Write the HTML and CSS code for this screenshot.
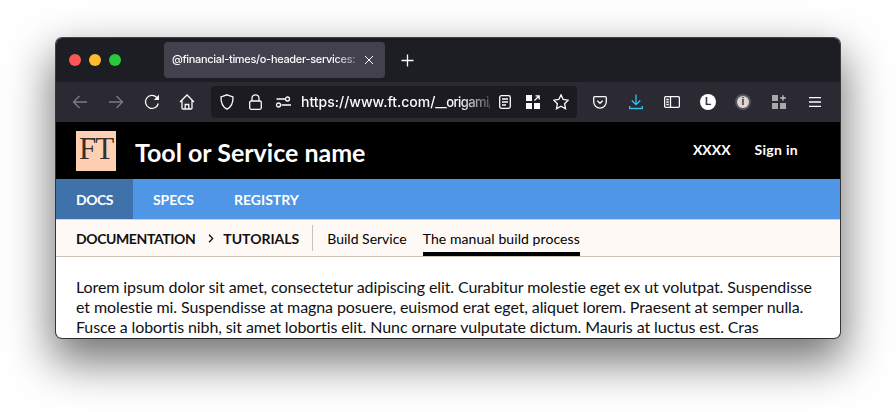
FILE: index.html
```html
<!DOCTYPE html>
<html lang="en">
<head>
<meta charset="utf-8">
<title>Tool or Service name</title>
<link rel="stylesheet" href="styles.css">
</head>
<body>
<div class="window">
  <div class="tabbar">
    <div class="lights"><span class="light red"></span><span class="light yellow"></span><span class="light green"></span></div>
    <div class="tab">
      <span class="tab-title">@financial-times/o-header-services:</span>
      <svg class="tab-close" width="10" height="10" viewBox="0 0 10 10"><path d="M1 1l8 8M9 1l-8 8"/></svg>
    </div>
    <svg class="newtab" width="13" height="13" viewBox="0 0 13 13"><path d="M6.500 .5v12M.5 6.500h12"/></svg>
  </div>
  <div class="toolbar">
    <svg class="ico dim back" width="16" height="16" viewBox="0 0 16 16"><path d="M15 8H1.500M7.500 2L1.500 8l6 6"/></svg>
    <svg class="ico dim fwd" width="16" height="16" viewBox="0 0 16 16"><path d="M1 8h13.500M8.500 2l6 6-6 6"/></svg>
    <svg class="ico reload" width="16" height="16" viewBox="0 0 16 16"><path d="M14.300 9.500A6.500 6.500 0 1 1 12.500 3.200L14.500 5"/><path class="fill" d="M15 .8v5.200H9.800z"/></svg>
    <svg class="ico home" width="16" height="16" viewBox="0 0 16 16"><path d="M1 8l7-7 7 7M3 6.500v7.500a1 1 0 0 0 1 1h8a1 1 0 0 0 1-1V6.500M6.200 15v-4.500h3.600V15"/></svg>
    <div class="urlbar">
      <svg class="ico shield" width="14" height="16" viewBox="0 0 14 16"><path d="M7 .8l6 2.200c.2 5.500-1.300 9.800-6 12.200C2.300 12.800.8 8.500 1 3z"/></svg>
      <svg class="ico lock" width="13" height="16" viewBox="0 0 13 16"><rect x=".7" y="7" width="11.600" height="8.300" rx="1.500"/><path d="M3 7V4.300a3.500 3.500 0 0 1 7 0V7"/></svg>
      <svg class="ico perm" width="15" height="12" viewBox="0 0 15 12"><circle cx="11.500" cy="3" r="2"/><circle cx="2.500" cy="9" r="2"/><path d="M.5 3h8.500M5.500 9H15"/></svg>
      <span class="url">https://www.ft.com/<span class="url-tail">__origami/</span></span>
      <svg class="ico reader" width="12" height="14" viewBox="0 0 12 14"><rect x=".7" y=".7" width="10.600" height="12.600" rx="1.800"/><path d="M3 4h6M3 7h6M3 10h4"/></svg>
      <svg class="ico apps" width="14" height="14" viewBox="0 0 14 14"><path class="solid" d="M0 0h6v6H0zM0 8h6v6H0zM8 8h6v6H8z"/><path class="thin" d="M8.500 5.500L13 1M9.500 .8h3.700v3.700"/></svg>
      <svg class="ico star" width="16" height="16" viewBox="0 0 16 16"><path d="M8 .9l2.200 4.600 5 .7-3.600 3.500.9 5L8 12.300l-4.500 2.400.9-5L.8 6.200l5-.7z"/></svg>
    </div>
    <svg class="ico pocket" width="14" height="13" viewBox="0 0 14 13"><path d="M1.800.7h10.400c.6 0 1.100.5 1.100 1.100v4a6.300 6.300 0 0 1-12.600 0v-4C.7 1.200 1.200.7 1.800.7zM4.300 4.700L7 7.300l2.700-2.600"/></svg>
    <svg class="ico download" width="14" height="16" viewBox="0 0 14 16"><path d="M7 .5v10M2.800 6.500L7 10.700l4.200-4.200M.7 12v2.500h12.600V12"/></svg>
    <svg class="ico sidebar" width="16" height="12" viewBox="0 0 16 12"><rect x=".6" y=".6" width="14.800" height="10.800" rx="1.500"/><path d="M6.500 .6v10.800M2.300 3.500h2.500M2.300 6h2.500M2.300 8.500h2.500"/></svg>
    <span class="ext-l">L</span>
    <span class="ext-pw">i</span>
    <svg class="ico addons" width="14" height="14" viewBox="0 0 14 14"><path class="solid gray" d="M0 0h6v6H0zM0 8h6v6H0zM8 8h6v6H8z"/><path class="thin gray" d="M11 .2v5.600M8.200 3h5.600"/></svg>
    <svg class="ico menu" width="12" height="10" viewBox="0 0 12 10"><path d="M0 .7h12M0 5h12M0 9.300h12"/></svg>
  </div>
  <header class="ft-header">
    <div class="logo">FT</div>
    <div class="title">Tool or Service name</div>
    <nav class="meta"><a>XXXX</a><a class="signin">Sign in</a></nav>
  </header>
  <nav class="primary">
    <a class="active">DOCS</a><a>SPECS</a><a>REGISTRY</a>
  </nav>
  <nav class="secondary">
    <div class="crumbs"><a class="doc">DOCUMENTATION</a><svg class="chev" width="6" height="9" viewBox="0 0 6 9"><path d="M1 .8l3.700 3.700L1 8.200"/></svg><a>TUTORIALS</a></div>
    <div class="subs"><a>Build Service</a><a class="current">The manual build process</a></div>
  </nav>
  <main class="content">
    <p>Lorem ipsum dolor sit amet, consectetur adipiscing elit. Curabitur molestie eget ex ut volutpat. Suspendisse<br>et molestie mi. Suspendisse at magna posuere, euismod erat eget, aliquet lorem. Praesent at semper nulla.<br>Fusce a lobortis nibh, sit amet lobortis elit. Nunc ornare vulputate dictum. Mauris at luctus est. Cras</p>
  </main>
</div>
</body>
</html>
```
FILE: styles.css
```css
* { box-sizing: border-box; }
html, body { margin: 0; height: 100%; background: #fff; overflow: hidden; }
body { padding: 38px 56px; font-family: "Lato", "Liberation Sans", sans-serif; }
a { color: inherit; text-decoration: none; }

.window {
  width: 784px; height: 300px; overflow: hidden;
  border-radius: 6px;
  background: #fff;
  box-shadow: 0 0 0 1px rgba(0,0,0,.7), 0 20px 45px 4px rgba(0,0,0,.55);
  display: flex; flex-direction: column;
}

.tabbar { height: 44px; flex: none; background: #1d1d24; display: flex; align-items: center; padding-left: 13px; }
.lights { display: flex; gap: 8px; width: 95px; }
.light { width: 12px; height: 12px; border-radius: 50%; }
.red { background: #fd5754; } .yellow { background: #febb2e; } .green { background: #29c83f; }
.tab { width: 221px; height: 36px; background: #42414d; border-radius: 4px; display: flex; align-items: center; padding-left: 8px; }
.tab-title { font: 500 11px/1.2 "Inter", "Liberation Sans", sans-serif; letter-spacing: -.32px; color: #fbfbfe; width: 190px; overflow: hidden; white-space: nowrap;
  -webkit-mask-image: linear-gradient(to right, #000 85%, rgba(0,0,0,.2)); mask-image: linear-gradient(to right, #000 85%, rgba(0,0,0,.2)); }
.tab-close { margin-left: 2px; fill: none; stroke: #fbfbfe; stroke-width: 1; }
.newtab { margin-left: 16px; fill: none; stroke: #fbfbfe; stroke-width: 1.300; }

.toolbar { height: 40px; flex: none; background: #2b2a33; display: flex; align-items: center; padding-left: 16px; }
.ico { flex: none; fill: none; stroke: #fbfbfe; stroke-width: 1.300; }
.ico .fill, .ico .solid { fill: #fbfbfe; stroke: none; }
.ico .gray { fill: #a8a8ac; stroke: none; }
.ico .thin { stroke-width: 1.300; fill: none; }
.ico .thin.gray { stroke: #c0c0c4; fill: none; }
.dim { stroke: #7d7c84; }
.fwd { margin-left: 20px; }
.reload { margin-left: 20px; }
.home { margin-left: 19px; }
.urlbar { width: 366px; height: 32px; margin-left: 16px; background: #1c1b22; border-radius: 4px; display: flex; align-items: center; padding-left: 9px; }
.lock { margin-left: 15px; }
.perm { margin-left: 14px; }
.url { font: 500 14px/1.2 "Inter", "Liberation Sans", sans-serif; color: #fbfbfe; margin-left: 10px; width: 189px; white-space: nowrap;
  -webkit-mask-image: linear-gradient(to right, #000 84%, rgba(0,0,0,.25)); mask-image: linear-gradient(to right, #000 84%, rgba(0,0,0,.25)); }
.url-tail { font-size: 13px; letter-spacing: -.6px; }
.reader { margin-left: 9px; }
.apps { margin-left: 15px; }
.star { margin-left: 13px; }
.pocket { margin-left: 16px; }
.download { margin-left: 22px; stroke: #2dc3ec; }
.sidebar { margin-left: 21px; }
.ext-l, .ext-pw { flex: none; width: 16px; height: 16px; border-radius: 50%; display: flex; align-items: center; justify-content: center; font: 700 10px/1 "Liberation Sans", sans-serif; }
.ext-l { background: #fff; color: #2b2a33; margin-left: 20px; }
.ext-pw { background: #d8d8d8; color: #2b2a33; margin-left: 21px; box-shadow: 0 0 0 2px #55555a; width: 12px; height: 12px; }
.addons { margin-left: 23px; }
.menu { margin-left: 23px; }

.ft-header { height: 57px; flex: none; background: #000; display: flex; align-items: center; padding-left: 20px; color: #fff; }
.logo { width: 40px; height: 40px; background: #ffcfb3; color: #33302e; font: 31px/36px "Liberation Serif", serif; text-align: center; align-self: flex-start; margin-top: 9px; letter-spacing: -1px; }
.title { font-size: 25px; font-weight: 700; margin-left: 19px; padding-top: 2px; }
.meta { margin-left: auto; margin-right: 42px; display: flex; gap: 24px; font-size: 14px; font-weight: 700; margin-top: -2px; }
.signin { letter-spacing: .3px; }

.primary { height: 41px; flex: none; background: #4f96e6; border-bottom: 1px solid #cfd3d6; display: flex; color: #fff; font-size: 14px; font-weight: 700; }
.primary a { padding: 0 20px; display: flex; align-items: center; }
.primary .active { background: #3f72ab; letter-spacing: -.5px; }

.secondary { height: 37px; flex: none; background: #fff9f5; border-bottom: 1px solid #ccc1b7; display: flex; align-items: stretch; padding-left: 20px; font-size: 14px; color: #000; }
.crumbs { display: flex; align-items: center; font-weight: 700; color: #111; align-self: center; height: 26px; padding-right: 13px; border-right: 1px solid #ccc1b7; }
.doc { letter-spacing: -.4px; }
.chev { margin: 0 9px 0 13px; fill: none; stroke: #111; stroke-width: 1.300; }
.subs { display: flex; margin-left: 14px; gap: 16px; }
.subs a { display: flex; align-items: center; padding-top: 5px; border-bottom: 4px solid transparent; }
.subs .current { border-bottom-color: #000; letter-spacing: .08px; }

.content { padding: 20px; font-size: 16px; line-height: 20px; letter-spacing: -.1px; color: #111; }
.content p { margin: 0; white-space: nowrap; }
```
